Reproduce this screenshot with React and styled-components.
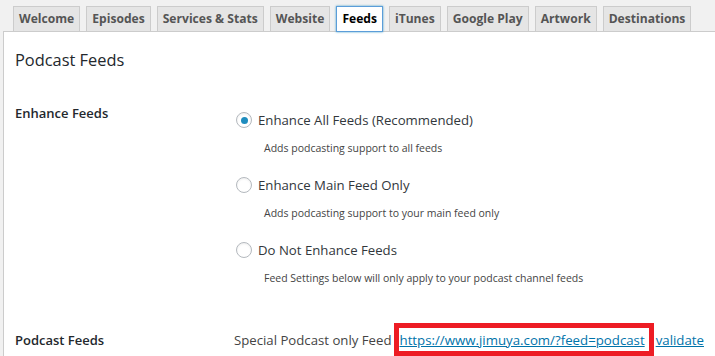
import React from "react";
import styled, { createGlobalStyle } from "styled-components";

const GlobalStyle = createGlobalStyle`
  html, body {
    margin: 0;
    padding: 0;
    background: #f1f1f1;
    overflow: hidden;
  }
  body {
    font-family: "Open Sans", "Noto Sans", sans-serif;
    color: #23282d;
  }
`;

const Page = styled.div`
  padding-left: 3px;
  height: 356px;
  display: flex;
  flex-direction: column;
`;

const TabBar = styled.nav`
  display: flex;
  gap: 6px;
  padding: 6px 0 0 10px;
  position: relative;
  z-index: 1;
`;

const Tab = styled.a`
  display: block;
  height: 24px;
  line-height: 24px;
  padding: 0 5px;
  font-size: 12.1px;
  font-weight: 700;
  color: ${(p) => (p.$active ? "#000" : "#555")};
  background: ${(p) => (p.$active ? "#fff" : "#e5e5e5")};
  border: 1px solid ${(p) => (p.$active ? "#5b9dd9" : "#ccc")};
  border-bottom: ${(p) => (p.$active ? "1px solid #5b9dd9" : "none")};
  margin-bottom: ${(p) => (p.$active ? "-2px" : "0")};
  box-shadow: ${(p) =>
    p.$active ? "0 0 2px rgba(30, 140, 190, 0.8)" : "none"};
  text-decoration: none;
  white-space: nowrap;
  cursor: pointer;
`;

const Panel = styled.section`
  flex: 1;
  background: #fff;
  border-top: 1px solid #ccc;
  border-left: 1px solid #ccc;
  padding: 16px 10px 0 10px;
`;

const Title = styled.h2`
  margin: 0;
  font-size: 16.4px;
  line-height: 23px;
  font-weight: 400;
  color: #23282d;
  padding-left: 1px;
`;

const Row = styled.div`
  display: grid;
  grid-template-columns: 220px max-content;
  margin-top: ${(p) => p.$top}px;
  align-items: ${(p) => (p.$center ? "center" : "start")};
`;

const RowLabel = styled.div`
  font-size: 13px;
  line-height: 18px;
  font-weight: 600;
  color: #23282d;
  padding-left: 1px;
`;

const Options = styled.div`
  display: flex;
  flex-direction: column;
  padding-top: 6px;
`;

const Option = styled.div`
  display: flex;
  flex-direction: column;
  padding-bottom: 19px;
  &:last-child {
    padding-bottom: 0;
  }
`;

const OptionLabel = styled.label`
  display: flex;
  align-items: center;
  height: 20px;
  font-size: 13.2px;
  color: #32373c;
  cursor: pointer;
`;

const Radio = styled.input.attrs({ type: "radio" })`
  appearance: none;
  -webkit-appearance: none;
  width: 16px;
  height: 16px;
  margin: 0 6px 0 2px;
  border-radius: 50%;
  border: 1px solid #b4b9be;
  background: #fff;
  box-shadow: inset 0 1px 2px rgba(0, 0, 0, 0.07);
  display: grid;
  place-items: center;
  box-sizing: border-box;
  &:checked::before {
    content: "";
    width: 7px;
    height: 7px;
    border-radius: 50%;
    background: #1e8cbe;
  }
`;

const Description = styled.p`
  margin: 10px 0 0 30px;
  font-size: 10.5px;
  line-height: 16px;
  color: #444;
`;

const FeedLine = styled.div`
  display: flex;
  align-items: center;
  gap: 2px;
  font-size: 13.2px;
  color: #444;
  white-space: nowrap;
`;

const Highlight = styled.span`
  display: inline-block;
  border: 5px solid #ed1c24;
  padding: 2px 4px 1px 1px;
  line-height: 20px;
`;

const Link = styled.a`
  color: #0073aa;
  text-decoration: underline;
  font-size: 13.25px;
`;

const tabs = [
  "Welcome",
  "Episodes",
  "Services & Stats",
  "Website",
  "Feeds",
  "iTunes",
  "Google Play",
  "Artwork",
  "Destinations",
];

const options = [
  {
    label: "Enhance All Feeds",
    extra: "(Recommended)",
    desc: "Adds podcasting support to all feeds",
    checked: true,
  },
  {
    label: "Enhance Main Feed Only",
    desc: "Adds podcasting support to your main feed only",
  },
  {
    label: "Do Not Enhance Feeds",
    desc: "Feed Settings below will only apply to your podcast channel feeds",
  },
];

export default function App() {
  return (
    <>
      <GlobalStyle />
      <Page>
        <TabBar>
          {tabs.map((t) => (
            <Tab key={t} $active={t === "Feeds"}>
              {t}
            </Tab>
          ))}
        </TabBar>
        <Panel>
          <Title>Podcast Feeds</Title>

          <Row $top={33}>
            <RowLabel>Enhance Feeds</RowLabel>
            <Options>
              {options.map((o) => (
                <Option key={o.label}>
                  <OptionLabel>
                    <Radio name="feed_mode" defaultChecked={o.checked} />
                    {o.label}
                    {o.extra && <>&nbsp;{o.extra}</>}
                  </OptionLabel>
                  <Description>{o.desc}</Description>
                </Option>
              ))}
            </Options>
          </Row>

          <Row $top={37} $center>
            <RowLabel>Podcast Feeds</RowLabel>
            <FeedLine>
              <span>Special Podcast only Feed</span>
              <Highlight>
                <Link href="#">https://www.jimuya.com/?feed=podcast</Link>
              </Highlight>
              <Link href="#">validate</Link>
            </FeedLine>
          </Row>
        </Panel>
      </Page>
    </>
  );
}
